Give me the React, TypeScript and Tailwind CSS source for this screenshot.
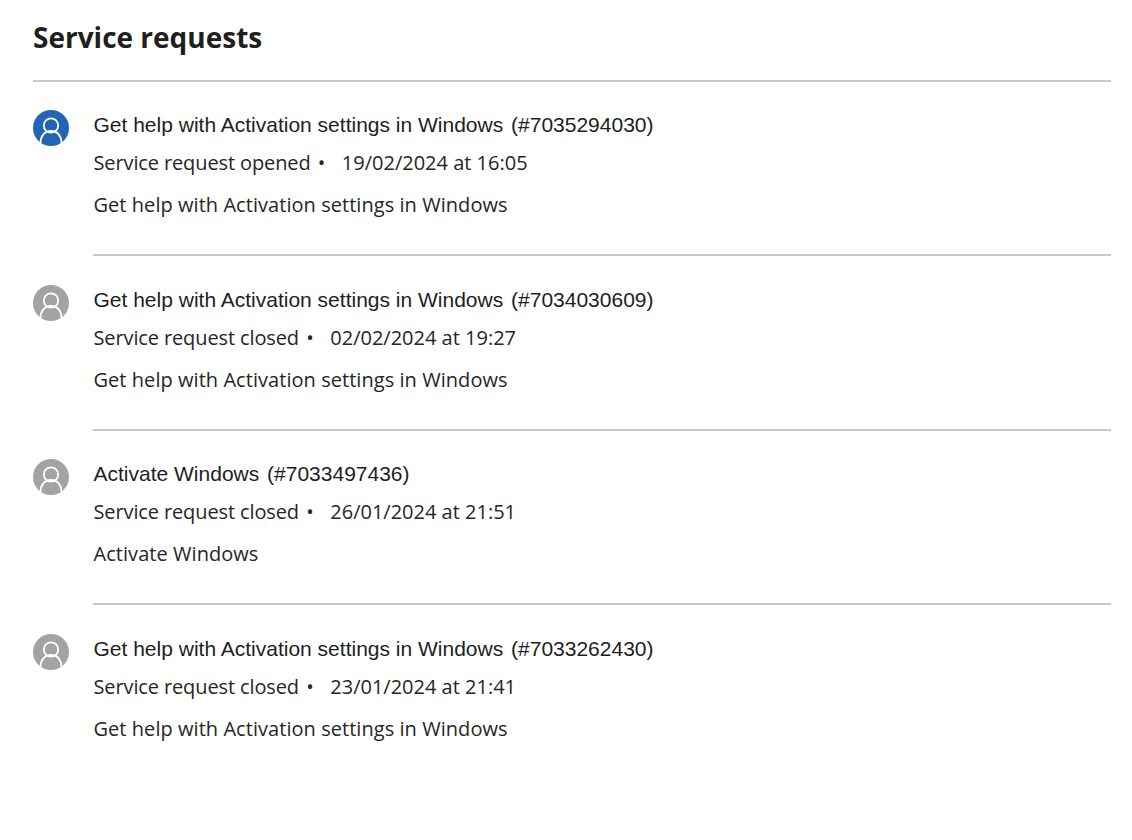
import React from 'react';

const requests = [
  { title: 'Get help with Activation settings in Windows', id: '#7035294030', status: 'Service request opened', date: '19/02/2024 at 16:05', desc: 'Get help with Activation settings in Windows', open: true },
  { title: 'Get help with Activation settings in Windows', id: '#7034030609', status: 'Service request closed', date: '02/02/2024 at 19:27', desc: 'Get help with Activation settings in Windows', open: false },
  { title: 'Activate Windows', id: '#7033497436', status: 'Service request closed', date: '26/01/2024 at 21:51', desc: 'Activate Windows', open: false },
  { title: 'Get help with Activation settings in Windows', id: '#7033262430', status: 'Service request closed', date: '23/01/2024 at 21:41', desc: 'Get help with Activation settings in Windows', open: false },
];

const Avatar = ({ open }: { open: boolean }) => (
  <div className={open ? 'w-9 h-9 rounded-full bg-[#2364b5] shrink-0' : 'w-9 h-9 rounded-full bg-[#a3a3a3] shrink-0'}>
    <svg viewBox="0 0 36 36" width="36" height="36" fill="none" stroke="white" strokeWidth="1.8">
      <circle cx="18" cy="15.5" r="7.2" />
      <path d="M7.5 33c0-7 4-12 10.5-12s10.5 5 10.5 12" />
    </svg>
  </div>
);

const App = () => {
  return (
    <div className="w-[1132px] h-[840px] bg-white pl-[33px] pr-[21px] pt-[17px] text-[#262626] font-['Open_Sans','Liberation_Sans',sans-serif] overflow-hidden">
      <h1 className="text-[28px] leading-10 font-bold text-[#201f1e] pb-[23px] border-b-2 border-[#c8c8c8]">Service requests</h1>
      <div className="pt-7">
        {requests.map((req, i) => (
          <div key={req.id} className="flex gap-6 h-[174.6px]">
            <Avatar open={req.open} />
            <div className="flex-1">
              <div className="mt-px pl-[0.5px] text-[21px] leading-7 font-['Liberation_Sans',sans-serif] text-[#201f1e] whitespace-pre">{req.title}<span className="ml-[2px]"> ({req.id})</span></div>
              <div className="mt-[10px] pl-[0.5px] text-[20px] leading-7 whitespace-pre">
                <span className="tracking-[-0.12px]">{req.status}</span> <span className="ml-[2px]">•</span>{'   '}<span className="ml-px">{req.date}</span>
              </div>
              <div className="mt-[14px] pl-[0.5px] text-[20px] leading-7 tracking-[0.05px]">{req.desc}</div>
              {i < requests.length - 1 && <div className="mt-[35px] h-0.5 bg-[#c8c8c8]" />}
            </div>
          </div>
        ))}
      </div>
    </div>
  );
};

export default App;
